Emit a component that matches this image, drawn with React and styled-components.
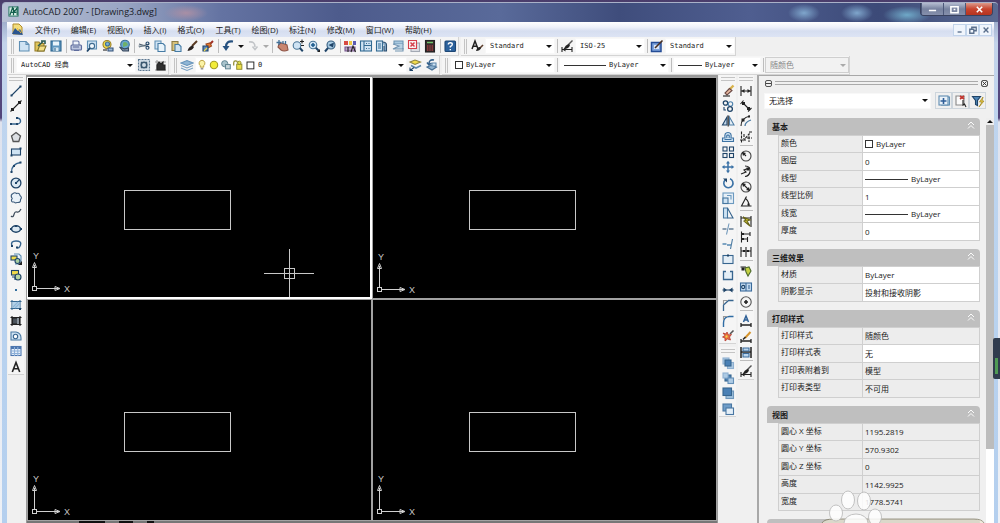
import React from 'react';
import styled, { createGlobalStyle, css } from 'styled-components';

const Global = createGlobalStyle`
  * { box-sizing: border-box; }
  html, body { margin: 0; height: 100%; overflow: hidden; }
  body { font: 8px/12px "Open Sans", "Noto Sans CJK SC", sans-serif; color: #1a1a1a; }
  button, select { font: inherit; color: inherit; margin: 0; padding: 0; border: 0; background: none; }
`;

/* ---------- icons ---------- */

const N = '#1f4468';
const L = '#cfe3f3';
const K = '#222';
const Y = '#f2dc4a';

const IconSvg = styled.svg`
  display: block;
  flex: none;
  width: 14px;
  height: 14px;
  fill: none;
  stroke: ${N};
  stroke-width: 1.1;
`;

const Icon = ({ name }) => (
  <IconSvg viewBox="0 0 14 14" aria-hidden="true">{ICONS[name]}</IconSvg>
);

const dot = (x, y, c = N, s = 2) => (
  <rect key={`${x}-${y}`} x={x - s / 2} y={y - s / 2} width={s} height={s} fill={c} stroke="none" />
);

const ICONS = {
  page: <><path d="M2.500 2.500h6.500l3 3v6.500h-9.500z" fill={L} stroke="#5f8fb4" /><path d="M9 2.500v3h3" stroke="#5f8fb4" /></>,
  open: <><path d="M2 3h4l1 1.500h4v7.500H2z" fill="#e0c55a" stroke="#9a7f2a" /><path d="M4.500 12l2-5h6.500l-2 5z" fill="#f3df86" stroke="#7e7128" /><path d="M5 7l5-4.500M8 2h4v3" stroke="#2d5c55" strokeWidth="1.600" /></>,
  save: <><rect x="2" y="2" width="10" height="10" fill="#5f97bf" stroke="#2c658f" /><rect x="4" y="2.500" width="6" height="4" fill="#eaf5fb" stroke="none" /><rect x="4.500" y="8.500" width="5" height="3.500" fill="#d7e8f2" stroke="none" /><path d="M6 9v3" stroke="#2c658f" /></>,
  print: <><path d="M4 6V2h5l1 1v3" fill="#eef3fa" stroke="#6c79a8" /><rect x="2" y="6" width="10.500" height="5" rx="1" fill="#bcc6df" stroke="#5d6b9c" /><path d="M4 8h6M5 11.500h5" stroke="#5d6b9c" /></>,
  preview: <><path d="M2.500 2h9v8h-9z" fill={L} stroke="#5f8fb4" /><circle cx="7" cy="7" r="2.600" fill="#f3f9fd" stroke="#3f6c90" /><path d="M5 9l-3 3.500" strokeWidth="1.800" /></>,
  publish: <><circle cx="6" cy="5.500" r="4" fill={Y} stroke="#9b7f26" /><circle cx="6.500" cy="5" r="2" fill="#7cb1d5" stroke="#3d6f95" /><path d="M7 9h5v3H7z" fill="#9bb7d4" stroke="#33527a" /><path d="M2 11h4" stroke={K} /></>,
  globe: <><circle cx="8" cy="5.500" r="4.300" fill="#67a5cf" stroke="#3a6f94" /><path d="M6 4q2-2 4 0t-1 3-3 1z" fill="#6fb069" stroke="none" /><path d="M2.500 8l5 2 4-1v3H6z" fill="#7e8fa5" stroke="#33455c" /></>,
  cut: <><path d="M2 5l10 3M2 8l10-3" stroke="#4d5d6c" /><circle cx="10.500" cy="4.500" r="1.500" /><circle cx="10.500" cy="8.800" r="1.500" /><path d="M1.500 7h6" stroke="#7b8c9a" /></>,
  copy: <><path d="M2 2h6v8H2z" fill={L} stroke="#5f8fb4" /><path d="M5 4.500h5l2 2v6H5z" fill="#e8f3fa" stroke="#457ba4" /></>,
  paste: <><path d="M3 2.500h6v9H3z" fill="#d7c27b" stroke="#8a7a45" /><path d="M6 5.500h4l2 2v5H6z" fill={L} stroke="#457ba4" /></>,
  brush: <><path d="M12 2L7 7" stroke="#5a3a22" strokeWidth="2" /><path d="M7.500 6.500q-4 1-5 5.500 5-.5 6.500-4z" fill="#2a2320" stroke="none" /></>,
  match: <><path d="M12 2L9 5" stroke="#a02f25" strokeWidth="2" /><path d="M5 5l4-1 1.500 3L7 9z" fill="#e77b2d" stroke="#a04a20" /><path d="M2 7h5v5H2z" fill="#5d86ba" stroke={N} /><path d="M3 12l3-3" stroke={Y} /></>,
  undo: <><path d="M12 2.500Q5 1.500 5 8" strokeWidth="2.200" stroke="#26517f" /><path d="M1.500 7h7L5 12z" fill="#26517f" stroke="none" /></>,
  redo: <path d="M3 3q6-1 6 5M6.500 7.500l2.500 3 2.500-3" strokeWidth="1.600" stroke="#c2c5c8" />,
  pan: <><path d="M4 5l3-1 5 2 1 5q-4 2-7 0L3 8z" fill="#c98670" stroke="#8e5446" /><path d="M4 1v5M1.500 3.500h5M8 2v3M10.500 2v3" stroke="#3f6f97" strokeWidth="1.300" /></>,
  zoomrt: <><circle cx="6" cy="6.500" r="3.800" fill={L} stroke="#4a7596" /><path d="M8.800 9l3 3.200" strokeWidth="2" /><path d="M9 2.500h4M11 .500v4M10 6.500h3" stroke={K} /></>,
  zoomwin: <><circle cx="6" cy="6" r="3.800" fill={L} stroke="#4a7596" /><path d="M8.800 8.800l3 3" strokeWidth="2" /><path d="M4 6h4M6 4v4" stroke="#1c5a8c" strokeWidth="1.500" /><path d="M10 13h3v-3z" fill={K} stroke="none" /></>,
  zoomprev: <><circle cx="8" cy="6" r="4" fill="#a9cbe2" stroke="#365e80" /><path d="M5 9l-3 3.500" strokeWidth="2" /><path d="M11 3.500L5.500 6 10 8.500z" fill={N} stroke="none" /></>,
  props: <><rect x="1" y="2" width="4" height="4" fill="#d84b42" stroke="none" /><rect x="6" y="2" width="3" height="4" fill="#edc945" stroke="none" /><rect x="10" y="2" width="3" height="4" fill="#5b5ab2" stroke="none" /><path d="M2 8h10v4H2z" fill="#bca1c8" stroke="#74558b" /><path d="M8 13l2-6 2.500 6M5 8v5" stroke={K} /></>,
  center: <><rect x="1.500" y="2" width="11" height="10" fill={L} stroke="#336b93" /><path d="M5 2v10M5 6.500h7M7 4.500h1M9.500 4.500h1M7 9.500h1M9.500 9.500h1" stroke="#336b93" /></>,
  palettes: <><rect x="1.500" y="2" width="6" height="10" fill={L} stroke="#336b93" /><path d="M3 5h3M3 7h3M3 9h3" stroke="#336b93" /><path d="M7.500 3q4 0 4 3v6h-2.500V7" fill="#86a9c7" stroke="#2c4f70" /></>,
  sheet: <><path d="M3 2h9v3H3z" fill="#a9c9e0" stroke="#6d94b2" /><path d="M2 5l6 2-6 3h10V5" fill="#b9d2e4" stroke="#7295b2" /><path d="M4 12h8V9" stroke="#7295b2" /></>,
  markup: <><rect x="4" y="4" width="8.500" height="8.500" fill="#dddfe4" stroke="#a3a9b3" /><path d="M1.500 1.500h8v8h-8z" fill="#fbeff0" stroke="#d43f4b" /><path d="M3.500 3.500l4 4M7.500 3.500l-4 4" stroke="#d43f4b" strokeWidth="1.500" /></>,
  calc: <><rect x="2.500" y="1.500" width="9" height="11.500" fill="#3a2a2c" stroke={K} /><path d="M4 3.500h6" stroke="#6fc26b" strokeWidth="1.500" /><path d="M4 7h6M4 9h6M4 11h6" stroke="#cf4a4a" strokeDasharray="1.400 .9" /></>,
  help: <><rect x="2" y="2" width="10.500" height="10.500" rx="1" fill="#2c629d" stroke="#1d4674" /><path d="M5.300 5.500q0-1.800 2-1.800t2 1.600-2 2.200v1M7.300 10v1.300" stroke="#fff" strokeWidth="1.400" /></>,
  textstyle: <><path d="M2 10L5 2l3 8M3.200 7.200h3.600" stroke={K} strokeWidth="1.500" /><path d="M13 6l-4 4" stroke="#5c3d2b" strokeWidth="1.600" /><path d="M10 8q-3 0-4 4 4 0 5-3z" fill={K} stroke="none" /></>,
  dimstyle: <><path d="M2 8v5M12 8v5M2 10.500h10" stroke={K} /><path d="M2.500 10.500l3-2v4z" fill={K} stroke="none" /><path d="M12.500 1.500L8 6" stroke="#555" strokeWidth="1.500" /><path d="M9 5q-4 1-5 5 5 0 6-4z" fill={K} stroke="none" /></>,
  tablestyle: <><rect x="1.500" y="3.500" width="9.500" height="9" fill="#7fa4dc" stroke="#244c96" strokeWidth="1.500" /><path d="M4 6h5v4H4z" fill="#dbe6f8" stroke="none" /><path d="M12.500 1.500L7 7l-2 2" stroke="#4a3020" strokeWidth="1.600" /></>,
  gear: <><rect x="1.500" y="1.500" width="11" height="11" fill="#d0dbe5" stroke="#5c7790" strokeDasharray="2 1" /><circle cx="7" cy="7" r="2.800" stroke="#3c5870" strokeWidth="1.600" /><path d="M4 4l1 1M10 4L9 5M4 10l1-1M10 10L9 9" stroke="#3c5870" /></>,
  home: <><path d="M2 4h11M4 2v10M2 12h11" stroke="#999" /><path d="M4 7l2-3 2 2 2-2v3h2v5H4z" fill="#2e2e2e" stroke={K} /></>,
  layers: <><path d="M1 5l6-2.500L13 5 7 7.500z" fill="#8fb6d6" stroke="#6794ba" /><path d="M1 7.500L7 10l6-2.500M1 10l6 2.500L13 10" stroke="#7ba2c4" /></>,
  bulb: <><path d="M7 1.500a3.500 3.500 0 0 1 2 6.300V9.500H5V7.800a3.500 3.500 0 0 1 2-6.300z" fill="#fbf3a5" stroke="#b89c3e" /><path d="M5.500 11.500h3" stroke="#555" /></>,
  sun: <circle cx="7" cy="7" r="4.300" fill="#f2ec3a" stroke="#a59d28" strokeWidth="1.300" />,
  vpfreeze: <><circle cx="5.500" cy="5.500" r="3.600" fill="#a9c3cc" stroke="#5b7f8d" /><rect x="6.500" y="6.500" width="5.500" height="5" fill="#c7d5da" stroke="#5b7f8d" /></>,
  lock: <><path d="M2 7.500V4.500a2.200 2.200 0 0 1 4.400 0" stroke="#8f8a2b" strokeWidth="1.400" /><rect x="5.500" y="6" width="6" height="6" fill="#ede04a" stroke="#8f8a2b" /><circle cx="8.500" cy="4.500" r="2" fill="#dfe04f" stroke="#8f8a2b" /></>,
  swatch: <rect x="3.500" y="3.500" width="8" height="8" fill="#fff" stroke={K} />,
  laycur: <><path d="M2 4l5-2 5.500 2L7 6.500z" fill={Y} stroke="#8d8440" /><path d="M3 7.500L8 10l5-2.500" stroke="#5f88ab" strokeWidth="1.600" /><path d="M2 12.500l4-3M2 9.500v3h3" stroke={N} /></>,
  layprev: <><path d="M3 9l5-2 4.500 2L8 12z" fill="#8fb2d0" stroke="#456e93" /><path d="M10 2Q5 1 5 6M3 4.500l2 2.500 2.500-2" strokeWidth="1.600" stroke="#35628c" /><path d="M8 5h4v3H8z" fill={L} stroke="#5f88ab" /></>,

  line: <><path d="M2.500 11.500l9-9" />{dot(2.5, 11.5)}{dot(11.5, 2.5)}</>,
  xline: <><path d="M1.500 12.500l11-11" stroke={K} />{dot(3.5, 10.5, K, 3)}{dot(10.5, 3.5, K, 3)}</>,
  pline: <><path d="M2 10h7q3-1 2.500-3.500T8 4" stroke="#37658f" strokeWidth="1.300" />{dot(2, 10)}{dot(8, 10)}{dot(8, 4)}</>,
  polygon: <path d="M7 2.500l4.500 3.500-1.700 5.500H4.200L2.500 6z" fill="#dcdfe3" stroke="#555" strokeWidth="1.300" />,
  rect: <><rect x="2.500" y="4" width="9" height="6" fill={L} />{dot(2.5, 10.5)}{dot(11.5, 3.5)}</>,
  arc: <><path d="M2.500 12q0-8 9-9.500" stroke="#37658f" strokeWidth="1.300" />{dot(2.5, 12)}{dot(5, 6)}{dot(11.5, 2.5)}</>,
  circle: <><circle cx="7" cy="7" r="4.900" fill="#dbe8f2" strokeWidth="1.300" /><path d="M7 7l3-3" />{dot(7, 7)}</>,
  cloud: <path d="M4 2.500q2-1.500 3.500 0 3-1 3.500 2 2.500 2 .5 4 .5 3.500-3.500 3-2 1-3-.5-3 .5-2.500-2.500Q4 7.500 2.500 6.500 1.500 3.500 4 2.500z" fill="#e9f1f8" stroke="#3f5d7d" />,
  spline: <path d="M2 10q2 2 3-1.500T8 6t4-3" stroke="#3b4a5a" strokeWidth="1.200" />,
  ellipse: <><ellipse cx="7" cy="7" rx="4.500" ry="3.200" fill="#dbe8f2" strokeWidth="1.500" />{dot(7, 4)}{dot(2, 7)}{dot(12, 7)}</>,
  earc: <><path d="M3 9Q1 4 7 4t4.500 4-3.500 2.500" stroke="#37658f" strokeWidth="1.400" />{dot(3, 9)}{dot(8, 10.5)}</>,
  insblock: <><path d="M5 2h5l2 2v8H6" fill="#e7f1f8" stroke="#5f8fb4" /><rect x="2" y="4" width="6" height="4" fill={Y} /><circle cx="8.500" cy="9" r="2.500" fill="#a9cfa0" /><path d="M9 13h4v-4z" fill={K} stroke="none" /></>,
  mkblock: <><rect x="2.500" y="2.500" width="7" height="4.500" fill={Y} /><circle cx="9" cy="9" r="3" fill="#b9d6a2" /><path d="M3 9h3v3" /></>,
  point: dot(7, 7, '#336f9f', 2),
  hatch: <><path d="M3 2v10M11 2v10M1.500 3.500h11M1.500 10.500h11" stroke="#356892" /><rect x="3.500" y="4" width="7" height="6" fill="#b3d2e9" stroke="none" /><path d="M4 9l5-5M6 10l5-5" stroke="#8db5d6" />{dot(11, 11)}</>,
  gradient: <><path d="M3 2v10M11 2v10M1.500 3.500h11M1.500 10.500h11" stroke={K} /><rect x="3.500" y="4" width="7" height="6" fill="#4c545c" stroke={K} /><path d="M8 4h2v6H8z" fill="#8a949d" stroke="none" /></>,
  region: <><path d="M2 3h5q5 1 5 6v2H2z" fill={L} stroke="#4b7ba4" /><circle cx="6.500" cy="7.500" r="2.200" fill="#fff" stroke="#37658f" /></>,
  table: <><rect x="2" y="2.500" width="10" height="9" fill="#e7f0fa" stroke="#4c76ae" /><path d="M2 4h10" stroke="#4c76ae" strokeWidth="2" /><path d="M2 7h10M2 9.500h10M5.500 3v9M8.800 3v9" stroke="#8db0d8" /></>,
  mtext: <path d="M3.300 12L7 2.500 10.700 12M4.500 8.800h5" stroke={K} strokeWidth="1.600" />,

  erase: <><path d="M12.500 1.500L8 6" stroke="#d8b24c" strokeWidth="2.400" /><path d="M8.500 4.500L4 9l2 2 5-4.500z" fill="#e9b9a0" stroke="#6b4a45" /><path d="M2 12h7" stroke={K} /></>,
  copyobj: <><circle cx="4.500" cy="4" r="2.200" strokeWidth="1.300" /><circle cx="9.500" cy="5" r="2.200" stroke="#4f83ae" /><circle cx="9" cy="10" r="2.400" strokeWidth="1.300" /><path d="M3 8v3h2" /></>,
  mirror: <><path d="M6 3v8H1.500z" fill="#bfd5e8" /><path d="M8.500 3v8H13z" fill="#e7f0f7" stroke="#4f7ea6" /><path d="M7.200 1.500v11" stroke={K} /></>,
  offset: <><path d="M1.500 11.500V8h2.500q-1-5.500 3-5.500T10 8h2.500v3.500z" fill={L} stroke="#3e73a3" /><path d="M3.500 9.500h7M6 8q-1-3 1-3t1 3" stroke="#3e73a3" /></>,
  array: <><rect x="2" y="2" width="4" height="4" /><rect x="8.500" y="2" width="4" height="4" /><rect x="2" y="8.500" width="4" height="4" /><rect x="8.500" y="8.500" width="4" height="4" /></>,
  move: <><path d="M7 2v10M2 7h10" stroke="#3b72a6" strokeWidth="1.500" /><path d="M7 .8L9 3.500H5zM7 13.200L9 10.500H5zM.8 7L3.500 5v4zM13.200 7L10.500 5v4z" fill="#3b72a6" stroke="none" /></>,
  rotate: <><path d="M4 4a4.600 4.600 0 1 0 5-1.200" stroke="#3b72a6" strokeWidth="1.600" /><path d="M2 2.500h4v4z" fill={N} stroke="none" /></>,
  scale: <><rect x="2" y="2" width="10.500" height="10.500" fill="#e7f0f7" stroke="#6c9ac0" /><rect x="2" y="7" width="5" height="5.500" fill={L} stroke="#47779f" /><path d="M6 4.500h4v4" stroke="#6c9ac0" /></>,
  stretch: <><path d="M2.500 2h4v10h-4z" fill={L} stroke="#47779f" /><path d="M6.500 2l5.500 10H6.500" stroke="#37658f" /></>,
  trim: <><path d="M8 1.500l-2.500 11" stroke="#6f97ba" /><path d="M1.500 7h4M8 7h4.500" /></>,
  extend: <><path d="M11.500 2L9.500 12" stroke="#47779f" /><path d="M1.500 7h4M6 8h4" stroke="#5789b2" strokeWidth="1.300" /></>,
  breakpt: <><rect x="2" y="3.500" width="10" height="8" fill="#e4eef6" stroke="#37658f" />{dot(7, 3.5)}</>,
  brk: <path d="M5 3.500H2.500v8h9v-8H9" fill="#e4eef6" stroke="#37658f" strokeWidth="1.300" />,
  join: <><path d="M1.500 7h11" /><path d="M2.500 4.500L6 7 2.500 9.500zM11.500 4.500L8 7l3.500 2.500z" fill={N} stroke="none" /></>,
  chamfer: <><path d="M2.500 13V7l5-4.500h5" stroke="#37658f" strokeWidth="1.300" /><path d="M2.500 6V2.500h4" stroke="#999" /></>,
  fillet: <><path d="M2.500 13V9q0-6.500 6-6.500h4" stroke="#2f6ca4" strokeWidth="1.400" /><path d="M2.500 6V2.500h4" stroke="#999" /></>,
  explode: <><path d="M12.500 1.500L9 5" stroke="#555" strokeWidth="1.600" /><path d="M2 4l3 1 1-2 1.500 3 3-.5-2 2.500 1 3-3-1-2.500 2V9L1.500 8 4 6.500z" fill="#e8703f" stroke="#b53a30" strokeWidth=".8" />{dot(5.5, 7.5, Y, 2)}</>,

  front: <><rect x="2" y="2" width="6" height="6" fill="#aecbe4" stroke="#8fb0d0" /><rect x="6.500" y="6.500" width="6" height="6" fill="#aecbe4" stroke="#8fb0d0" /><rect x="4" y="4" width="6" height="6" fill="#4a80b5" stroke="#37658f" /></>,
  back: <><rect x="4" y="4" width="6" height="6" fill="#4a80b5" stroke="#37658f" /><rect x="2" y="2" width="5" height="5" fill="#aecbe4" stroke="#8fb0d0" /><rect x="7" y="7" width="5.500" height="5.500" fill="#aecbe4" stroke="#648fb7" /></>,
  above: <><rect x="5" y="5" width="7.500" height="7.500" fill="#9fc0dd" stroke="#6f97bb" /><rect x="2" y="2" width="8.500" height="7.500" fill="#4a80b5" stroke="#37658f" /></>,
  under: <><rect x="2" y="2" width="8.500" height="7" fill="#6f9dc8" stroke="#4a77a3" /><rect x="5" y="6" width="7.500" height="6.500" fill="#e3eef7" stroke="#4a77a3" /></>,

  dlinear: <><path d="M2 2v10M12 2v10M2 7h10" stroke={K} /><path d="M2.500 7l3-2v4zM11.500 7l-3-2v4z" fill={K} stroke="none" /></>,
  daligned: <><path d="M3.500 3.500l7 7M1.500 5l3-3.500M9 12.500l3.500-3.500" stroke={K} />{dot(4.5, 4.5, K, 3)}{dot(9.5, 9.5, K, 3)}</>,
  darc: <><path d="M2 12q0-8 9-10" stroke={K} /><path d="M6 12q0-4 6-6" stroke="#47779f" strokeWidth="1.300" />{dot(4, 6, K, 3)}{dot(10, 2.5, K)}</>,
  dord: <path d="M2.500 1.500v11M1 10h6M5 4v6l5-6v8M8 8h5M10 2h3" stroke={K} strokeDasharray="3 1" />,
  dradius: <><circle cx="7" cy="7" r="5" stroke="#444" /><path d="M7 7L3.500 3.500" stroke={K} /><path d="M3 3l4 1-3 3z" fill={K} stroke="none" /></>,
  djog: <><path d="M6 2q6 0 5 6-1 4-5 4.500M2 10l5-2-2-2 5-2" stroke={K} />{dot(9, 5, K, 3)}</>,
  ddiam: <><circle cx="7" cy="7" r="5" stroke="#444" /><path d="M3.500 3.500l7 7" stroke={K} /><path d="M3 3l4 1-3 3zM11 11l-4-1 3-3z" fill={K} stroke="none" /></>,
  dangular: <><path d="M7.500 1.500L2.500 11H12.500M6 3q4 3 4 8" stroke={K} />{dot(9.5, 9.5, K)}</>,
  dquick: <><path d="M2 2v11M12 2v11M2 4h10" stroke={K} /><path d="M4 3l7 3-3 1 3 5-6-5 2-1z" fill="#e8de32" stroke="#68641b" /></>,
  dbase: <><path d="M2.500 1.500v11M2.500 4h8.500M11 2v4M2.500 9h6M8.500 7v5" stroke={K} />{dot(4, 4, K)}{dot(4, 9, K)}</>,
  dcont: <><path d="M2 2v10M7 2v10M12 2v10M2 6h10" stroke={K} />{dot(5, 6, K)}{dot(9, 6, K)}</>,
  leader: <><path d="M1.500 3h5l3 4" stroke={K} /><path d="M6 4l4-1 2 4-3 5-2-4z" fill="#c4d043" stroke="#4d6a2b" />{dot(4, 5, K, 3)}</>,
  tol: <><rect x="1.500" y="3" width="11" height="8" fill="#c3daf0" stroke="#3b6b9b" /><path d="M7 3v8M10 5v4" stroke="#3b6b9b" /><circle cx="4.200" cy="7" r="1.600" /></>,
  cmark: <><circle cx="7" cy="7" r="5.200" stroke="#555" /><path d="M7 5v4M5 7h4" stroke={K} strokeWidth="1.600" /></>,
  dedit: <><path d="M2 9v4M12 9v4M2 11h10" stroke={K} strokeWidth="1.300" /><path d="M4.500 8L7 2l2.500 6M5.500 6h3" stroke="#2f6096" strokeWidth="1.500" /></>,
  dtedit: <><path d="M2 9v4M12 9v4M2 11h10" stroke={K} strokeWidth="1.300" /><path d="M11.500 2L6 8" stroke="#d5942d" strokeWidth="2" /><path d="M6.500 7L4 9.500" stroke={K} strokeWidth="1.500" /></>,
  dupdate: <><path d="M2 2v11M12 2v11M2 7h10" stroke={K} strokeWidth="1.500" /><path d="M4 3h6v3H4zM4 8.500h6V12H4z" fill="#b9d4ec" stroke="#3b6b9b" /></>,

  pickadd: <><rect x="4.500" y="3" width="8" height="8" fill={L} stroke="#5f8cb1" /><rect x="2" y="2" width="9" height="9" fill="#eaf2f9" stroke="#5f8cb1" /><path d="M6.500 4v6M3.500 7h6" stroke="#2f5e97" strokeWidth="1.600" /></>,
  selobj: <><path d="M2 2h8v9H2z" fill="#fbfbfb" stroke="#888" /><path d="M6 5l4-3M6 2l4 3" stroke="#c2352e" strokeWidth="1.600" /><path d="M9 6v5l1.500-1 1.500 3" stroke={K} /></>,
  qselect: <><path d="M1.500 2.500h8l-3 4v5l-2-1v-4z" fill="#4d83b4" stroke={N} /><path d="M12 3L8.500 8h2.500L8 13l5-6h-2z" fill="#ead044" stroke="#a08421" strokeWidth=".7" /></>,
};

/* ---------- window frame ---------- */

const Desktop = styled.div`
  position: relative;
  display: flex;
  height: 100vh;
  padding: 2px 2px 0 2px;
  overflow: hidden;
  background: linear-gradient(#4a3d6b, #5b4f85 30px, #51447a 118px, #dfe3ee 122px, #eef1f6 100%);
`;

const Window = styled.div`
  flex: 1;
  min-width: 0;
  display: flex;
  flex-direction: column;
  padding: 0 4px 0 5px;
  border-top: 1px solid #a9b1c8;
  border-radius: 4px 4px 0 0;
  background: linear-gradient(#8290b4, #c3d3ea 40px, #bdd5f0 160px, #b4cfee 100%);
`;

const TitleBar = styled.header`
  display: flex;
  flex: none;
  align-items: flex-start;
  height: 19px;
  margin: 0 -4px 0 -5px;
  padding: 0 5px 0 6px;
  border-radius: 4px 4px 0 0;
  background:
    radial-gradient(ellipse 22px 8px at 184px 10px, #a98fa5, transparent),
    radial-gradient(ellipse 16px 9px at 802px 10px, #7fa6cc, transparent),
    radial-gradient(ellipse 16px 9px at 855px 10px, #7fa6cc, transparent),
    radial-gradient(ellipse 24px 9px at 905px 12px, #6fa9c8, transparent),
    linear-gradient(90deg, #b7c0d4, #9aa6c4 12%, #6473a2 22%, #4d5b8c 34%, #596a9a 50%, #3f4d7c 62%, #4f5e90 75%, #3c4a78 88%, #5a6a92);
`;

const TitleLogo = styled.svg`
  width: 11px;
  height: 11px;
  margin-top: 3px;
`;

const TitleText = styled.h1`
  flex: 1;
  margin: 0 0 0 4px;
  font-size: 9px;
  line-height: 18px;
  font-weight: 400;
  color: #1a1d28;
`;

const Caption = styled.div`
  display: flex;
  border: 1px solid #39425f;
  border-top: 0;
  border-radius: 0 0 4px 4px;
  overflow: hidden;
`;

const CaptionButton = styled.button`
  display: flex;
  align-items: center;
  justify-content: center;
  width: ${(p) => (p.$close ? 27 : 22)}px;
  height: 12px;
  border-left: 1px solid #4d587a;
  background: ${(p) => (p.$close
    ? 'linear-gradient(#dd9a8b, #c8442f 50%, #b53420)'
    : 'linear-gradient(#b4bcd0, #77829f 50%, #8690ac)')};
`;

const Client = styled.div`
  flex: 1;
  min-height: 0;
  display: flex;
  flex-direction: column;
  background: #f0f0f0;
`;

const MenuBar = styled.nav`
  display: flex;
  flex: none;
  align-items: center;
  gap: 11px;
  height: 15px;
  padding: 0 2px 0 4px;
  background: linear-gradient(#fff, #eef1fa 35%, #d6def0 60%, #dde4f4);
`;

const MenuItem = styled.button`
  line-height: 14px;
  white-space: nowrap;
`;

const MdiControls = styled.div`
  display: flex;
  margin-left: auto;
`;

const MdiButton = styled.button`
  display: flex;
  align-items: center;
  justify-content: center;
  width: 13px;
  height: 12px;
  border: 1px solid #c2d4ea;
  background: #f0f5fc;
`;

/* ---------- toolbars ---------- */

const ToolRow = styled.div`
  display: flex;
  flex: none;
  align-items: stretch;
  gap: 2px;
  height: 19px;
  padding-left: 1px;
`;

const Bar = styled.div`
  display: flex;
  flex-direction: ${(p) => (p.$vertical ? 'column' : 'row')};
  align-items: center;
  border: 1px solid #d4d4d4;
  border-width: ${(p) => (p.$vertical ? '0 0 1px' : '0 1px 1px 0')};
  background: #f5f5f5;
`;

const Grip = styled.span`
  flex: none;
  border: 1px solid #c4c4c4;
  ${(p) => (p.$vertical
    ? css`width: 14px; height: 4px; margin: 2px 0; border-width: 1px 0;`
    : css`width: 3px; height: 15px; margin: 0 2px 0 3px; border-width: 0 1px;`)}
`;

const Divider = styled.span`
  flex: none;
  background: #bdbdbd;
  ${(p) => (p.$vertical
    ? css`width: 13px; height: 1px; margin: 1px 0 2px;`
    : css`width: 1px; height: 14px; margin: 0 1px 0 2px;`)}
`;

const ToolButton = styled.button`
  display: flex;
  flex: none;
  align-items: center;
  justify-content: center;
  width: 16px;
  height: 16px;
`;

const VToolButton = styled(ToolButton)`
  height: 15px;
  &:nth-of-type(3n) { height: 16px; }
`;

const DropButton = styled.button`
  display: flex;
  flex: none;
  align-items: center;
  justify-content: center;
  width: 9px;
  height: 16px;
`;

const Caret = styled.span`
  flex: none;
  border: solid transparent;
  border-width: 3px 3px 0;
  border-top-color: ${(p) => (p.$pale ? '#aaa' : '#111')};
`;

const ComboBox = styled.div`
  display: flex;
  align-items: center;
  flex: ${(p) => (p.$width ? 'none' : '1')};
  width: ${(p) => (p.$width ? `${p.$width}px` : 'auto')};
  min-width: 0;
  height: 16px;
  padding: 0 2px 0 4px;
  border: 1px solid ${(p) => (p.$disabled ? '#cfcfcf' : '#f8f8f8')};
  background: ${(p) => (p.$disabled ? '#f2f2f2' : '#fff')};
  color: ${(p) => (p.$disabled ? '#888' : '#1a1a1a')};
  font-family: ${(p) => (p.$ui ? 'inherit' : '"DejaVu Sans Mono", "Noto Sans CJK SC", monospace')};
  font-size: ${(p) => (p.$ui ? 8 : 7)}px;
`;

const Select = styled.select`
  flex: 1;
  min-width: 0;
  height: 14px;
  appearance: none;
  outline: 0;
  opacity: 1;
`;

const SmallIcons = styled.span`
  display: flex;
  margin: 0 2px 0 -4px;
  & > svg { width: 12px; height: 12px; }
`;

const LineSample = styled.span`
  flex: none;
  width: ${(p) => p.$length}px;
  height: 1px;
  margin-right: 3px;
  background: #333;
`;

const Swatch = styled.span`
  flex: none;
  width: 8px;
  height: 8px;
  margin-right: 3px;
  border: 1px solid #333;
  background: #fff;
`;

const Combo = ({ label, value, width, prefix, disabled, ui }) => (
  <ComboBox $width={width} $disabled={disabled} $ui={ui}>
    {prefix}
    <Select aria-label={label} defaultValue={value} disabled={disabled}>
      <option>{value}</option>
    </Select>
    <Caret $pale={disabled} />
  </ComboBox>
);

const Tools = ({ items, vertical }) => items.map((n, i) => {
  const Btn = vertical ? VToolButton : ToolButton;
  if (n === '|') return <Divider key={i} $vertical={vertical} />;
  if (n === 'v') return <DropButton key={i} aria-label="drop"><Caret $pale={items[i - 1] === 'redo'} /></DropButton>;
  return <Btn key={i} aria-label={n}><Icon name={n} /></Btn>;
});

/* ---------- workspace ---------- */

const Workspace = styled.div`
  flex: 1;
  min-height: 0;
  display: flex;
`;

const SideColumn = styled.div`
  flex: none;
  display: flex;
  flex-direction: column;
  gap: 3px;
  width: ${(p) => p.$width}px;
  padding: 0 ${(p) => p.$end || 1}px 0 1px;
`;

const Drawing = styled.main`
  flex: 1;
  min-width: 0;
  display: flex;
  flex-direction: column;
  border: 2px solid #999;
  border-width: 2px 1px 0 1px;
  background: #999;
`;

const Viewports = styled.div`
  flex: 1;
  min-height: 0;
  display: grid;
  grid-template: 1fr 1fr / 1fr 1fr;
`;

const Viewport = styled.section`
  min-width: 0;
  min-height: 0;
  border: 1px solid ${(p) => (p.$active ? '#fff' : '#a2a2a2')};
  border-width: ${(p) => (p.$active ? '1px 2px 2px 1px' : '1px')};
  display: grid;
  background: #000;
  & > * { grid-area: 1 / 1; }
`;

const Scene = styled.svg`
  display: block;
  width: 100%;
  height: 100%;
  fill: none;
  stroke: #c8c8c8;
`;

const Ucs = styled.svg`
  display: block;
  align-self: end;
  width: 46px;
  height: 48px;
  fill: none;
  stroke: #d0d0d0;
  text { fill: #c8c8c8; stroke: none; font: 9px "Liberation Sans", sans-serif; }
`;

const CommandStrip = styled.div`
  flex: none;
  height: 2px;
  background: linear-gradient(90deg, transparent 52px, #111 52px 78px, #777 78px 92px, #111 92px 106px, #777 106px 120px, #111 120px 127px, transparent 127px), #777;
`;

const View = ({ active }) => (
  <Viewport $active={active}>
    <Scene>
      <rect x="96.500" y="112.500" width="106" height="39" />
      {active && (
        <g>
          <path d="M236 195.500h50M261.500 171v49" />
          <rect x="256.500" y="190.500" width="10" height="10" />
        </g>
      )}
    </Scene>
    <Ucs viewBox="0 0 46 48">
      <rect x="4.500" y="37.500" width="4" height="4" />
      <path d="M6.500 37V16M9 39.500h22" />
      <path d="M4.500 18.500l2-5 2 5zM27 37.500l5 2-5 2z" />
      <text x="5" y="10">Y</text>
      <text x="36" y="43">X</text>
    </Ucs>
  </Viewport>
);

/* ---------- properties palette ---------- */

const Palette = styled.aside`
  flex: none;
  display: flex;
  flex-direction: column;
  width: 237px;
  border: solid #a8a8a8;
  border-width: 1px 0 0 2px;
  background: #f0f0f0;
`;

const PaletteHead = styled.div`
  display: flex;
  flex: none;
  align-items: center;
  gap: 3px;
  height: 14px;
  padding: 0 6px 0 6px;
`;

const HeadButton = styled.button`
  display: flex;
  align-items: center;
  justify-content: center;
  width: 7px;
  height: 7px;
  border: 1px solid #555;
  border-radius: 2px;
`;

const HeadRule = styled.span`
  flex: 1;
  height: 4px;
  border: 1px solid #aaa;
  border-width: 1px 0;
`;

const Chooser = styled.div`
  display: flex;
  flex: none;
  align-items: center;
  padding: 2px 8px 9px 5px;
  gap: 4px;
`;

const ChooserButtons = styled.div`
  display: flex;
`;

const ChooserButton = styled(ToolButton)`
  width: 17px;
  height: 17px;
  border: 1px solid #cdd5dc;
`;

const Scroller = styled.div`
  flex: 1;
  min-height: 0;
  display: flex;
  justify-content: space-between;
`;

const Groups = styled.div`
  flex: 1;
  min-width: 0;
  margin: 0 6px 0 8px;
  overflow: hidden;
`;

const Group = styled.section`
  margin-bottom: 8px;
`;

const GroupHead = styled.h2`
  display: flex;
  align-items: center;
  justify-content: space-between;
  height: 17px;
  margin: 0;
  padding: 0 5px;
  border-radius: 4px 4px 0 0;
  background: #bfbfbf;
  font-size: 8px;
  font-weight: 700;
`;

const Chevron = styled.svg`
  width: 8px;
  height: 8px;
  margin-bottom: 3px;
  fill: none;
  stroke: #fafafa;
`;

const Table = styled.table`
  width: calc(100% - 11px);
  margin-left: 11px;
  border-collapse: collapse;
  table-layout: fixed;
  tr { height: 17px; }
  tr:nth-child(even) { height: 18px; }
  th, td { padding: 0 2px; border: 1px solid #cfcfcf; text-align: left; font-weight: 400; line-height: 12px; overflow: hidden; white-space: nowrap; }
  th { width: 84px; background: #ececec; padding-bottom: 3px; }
`;

const Value = styled.td`
  background: ${(p) => (p.$locked ? '#ededed' : '#fff')};
`;

const ValueLine = styled.span`
  display: flex;
  align-items: center;
`;

const ScrollTrack = styled.div`
  flex: none;
  display: flex;
  flex-direction: column;
  width: 8px;
  background: #fff;
`;

const ScrollArrow = styled.button`
  display: flex;
  align-items: center;
  justify-content: center;
  height: 7px;
  background: #eee;
  & > span { transform: rotate(180deg); }
`;

const ScrollThumb = styled.div`
  flex: 0 0 80%;
  background: #bcbcbc;
`;

const DeskGadget = styled.div`
  position: absolute;
  right: 0;
  top: 338px;
  display: flex;
  align-items: flex-end;
  justify-content: center;
  width: 7px;
  height: 41px;
  padding-bottom: 5px;
  border-radius: 2px 0 0 2px;
  background: #303c4e;
  &::after { content: ''; width: 3px; height: 16px; background: #4f9a55; }
`;

const Paw = styled.svg`
  position: absolute;
  right: 10px;
  bottom: 0;
  width: 220px;
  height: 34px;
`;

const GROUPS = [
  ['基本', [
    ['颜色', 'ByLayer', 'swatch'], ['图层', '0'], ['线型', 'ByLayer', 'line'],
    ['线型比例', '1'], ['线宽', 'ByLayer', 'line'], ['厚度', '0'],
  ]],
  ['三维效果', [['材质', 'ByLayer'], ['阴影显示', '投射和接收阴影']]],
  ['打印样式', [
    ['打印样式', '随颜色', 'locked'], ['打印样式表', '无'],
    ['打印表附着到', '模型', 'locked'], ['打印表类型', '不可用', 'locked'],
  ]],
  ['视图', [
    ['圆心 X 坐标', '1195.2819', 'locked'], ['圆心 Y 坐标', '570.9302', 'locked'],
    ['圆心 Z 坐标', '0', 'locked'], ['高度', '1142.9925', 'locked'], ['宽度', '1778.5741', 'locked'],
  ]],
  ['其他', []],
];

const PropertyGroup = ({ title, rows }) => (
  <Group>
    <GroupHead>
      {title}
      <Chevron viewBox="0 0 8 8"><path d="M1 4l3-3 3 3M1 7.500l3-3 3 3" /></Chevron>
    </GroupHead>
    {rows.length > 0 && (
      <Table>
        <tbody>
          {rows.map(([name, value, kind]) => (
            <tr key={name}>
              <th scope="row">{name}</th>
              <Value $locked={kind === 'locked'}>
                <ValueLine>
                  {kind === 'swatch' && <Swatch />}
                  {kind === 'line' && <LineSample $length={43} />}
                  {value}
                </ValueLine>
              </Value>
            </tr>
          ))}
        </tbody>
      </Table>
    )}
  </Group>
);

/* ---------- data ---------- */

const MENUS = ['文件(F)', '编辑(E)', '视图(V)', '插入(I)', '格式(O)', '工具(T)', '绘图(D)', '标注(N)', '修改(M)', '窗口(W)', '帮助(H)'];

const STANDARD = [
  'page', 'open', 'save', '|', 'print', 'preview', 'publish', 'globe', '|',
  'cut', 'copy', 'paste', 'brush', 'match', '|', 'undo', 'v', 'redo', 'v', '|',
  'pan', 'zoomrt', 'zoomwin', 'zoomprev', '|',
  'props', 'center', 'palettes', 'sheet', 'markup', 'calc', '|', 'help',
];
const DRAW = ['line', 'xline', 'pline', 'polygon', 'rect', 'arc', 'circle', 'cloud', 'spline', 'ellipse', 'earc', 'insblock', 'mkblock', 'point', 'hatch', 'gradient', 'region', 'table', 'mtext'];
const MODIFY = ['erase', 'copyobj', 'mirror', 'offset', 'array', 'move', 'rotate', 'scale', 'stretch', 'trim', 'extend', 'breakpt', 'brk', 'join', 'chamfer', 'fillet', 'explode'];
const ORDER = ['front', 'back', 'above', 'under'];
const DIMENSION = ['dlinear', 'daligned', 'darc', 'dord', '|', 'dradius', 'djog', 'ddiam', 'dangular', '|', 'dquick', 'dbase', 'dcont', '|', 'leader', 'tol', 'cmark', '|', 'dedit', 'dtedit', 'dupdate', '|', 'dimstyle'];

const FileLogo = () => (
  <svg width="13" height="13" viewBox="0 0 13 13" aria-hidden="true">
    <path d="M2 1h6l3 3v7H2z" fill="#f3dd7c" stroke="#b08b2a" />
    <path d="M1 11l3-6 3 3 2-2 3 6z" fill="#2b558f" />
    <path d="M6 5l4 5" stroke="#e8b73c" />
  </svg>
);

const Glyph = ({ d, color = '#fff', size = 9 }) => (
  <svg width={size} height={size} viewBox="0 0 10 10" fill="none" stroke={color} strokeWidth="1.700" aria-hidden="true"><path d={d} /></svg>
);

export default function App() {
  return (
    <Desktop lang="zh-CN">
      <Global />
      <Window>
        <TitleBar>
          <TitleLogo viewBox="0 0 12 12" aria-hidden="true">
            <rect x="1" y="1" width="10" height="10" fill="#d9efe6" stroke="#1c6f5c" />
            <path d="M2 10L5 2l2 4 3-4v8M3 7h6M6 2v8" fill="none" stroke="#14604e" strokeWidth="1.300" />
          </TitleLogo>
          <TitleText>AutoCAD 2007 - [Drawing3.dwg]</TitleText>
          <Caption>
            <CaptionButton aria-label="minimize"><Glyph d="M1 6h8" /></CaptionButton>
            <CaptionButton aria-label="maximize"><Glyph d="M1 2h8v6.500H1zM4 5h2" /></CaptionButton>
            <CaptionButton $close aria-label="close"><Glyph d="M2 2l6 6M8 2l-6 6" /></CaptionButton>
          </Caption>
        </TitleBar>

        <Client>
          <MenuBar>
            <FileLogo />
            {MENUS.map((m) => <MenuItem key={m}>{m}</MenuItem>)}
            <MdiControls>
              <MdiButton aria-label="minimize drawing"><Glyph size={8} color="#5a6f8c" d="M2 7.500h5" /></MdiButton>
              <MdiButton aria-label="restore drawing"><Glyph size={8} color="#5a6f8c" d="M1 4h5v5H1zM3.500 4V1.500H9V6H6" /></MdiButton>
              <MdiButton aria-label="close drawing"><Glyph size={8} color="#5a6f8c" d="M2 2l6 6M8 2l-6 6" /></MdiButton>
            </MdiControls>
          </MenuBar>

          <ToolRow>
            <Bar><Grip /><Tools items={STANDARD} /></Bar>
            <Bar>
              <Grip />
              <Tools items={['textstyle']} />
              <Combo label="文字样式" value="Standard" width={70} />
              <Tools items={['|', 'dimstyle']} />
              <Combo label="标注样式" value="ISO-25" width={70} />
              <Tools items={['|', 'tablestyle']} />
              <Combo label="表格样式" value="Standard" width={70} />
            </Bar>
          </ToolRow>

          <ToolRow>
            <Bar>
              <Grip />
              <Combo label="工作空间" value="AutoCAD 经典" width={120} />
              <Tools items={['gear', 'home']} />
            </Bar>
            <Bar>
              <Grip />
              <Tools items={['layers']} />
              <Combo
                label="图层"
                value="0"
                width={212}
                prefix={<SmallIcons>{['bulb', 'sun', 'vpfreeze', 'lock', 'swatch'].map((n) => <Icon key={n} name={n} />)}</SmallIcons>}
              />
              <Tools items={['laycur', 'layprev']} />
            </Bar>
            <Bar>
              <Grip />
              <Combo label="颜色" value="ByLayer" width={105} prefix={<Swatch />} />
              <Tools items={['|']} />
              <Combo label="线型" value="ByLayer" width={110} prefix={<LineSample $length={42} />} />
              <Tools items={['|']} />
              <Combo label="线宽" value="ByLayer" width={88} prefix={<LineSample $length={24} />} />
              <Tools items={['|']} />
              <Combo label="打印样式" value="随颜色" width={84} disabled ui />
            </Bar>
          </ToolRow>

          <Workspace>
            <SideColumn $width={19} $end={2}>
              <Bar $vertical><Grip $vertical /><Tools vertical items={DRAW} /></Bar>
            </SideColumn>

            <Drawing>
              <Viewports>
                <View active />
                <View />
                <View />
                <View />
              </Viewports>
              <CommandStrip />
            </Drawing>

            <SideColumn $width={19}>
              <Bar $vertical><Grip $vertical /><Tools vertical items={MODIFY} /></Bar>
              <Bar $vertical><Grip $vertical /><Tools vertical items={ORDER} /></Bar>
            </SideColumn>
            <SideColumn $width={20} $end={3}>
              <Bar $vertical><Grip $vertical /><Tools vertical items={DIMENSION} /></Bar>
            </SideColumn>

            <Palette>
              <PaletteHead>
                <HeadButton aria-label="collapse"><Glyph size={5} color="#222" d="M0 5h10" /></HeadButton>
                <HeadRule />
                <HeadButton aria-label="close palette"><Glyph size={5} color="#222" d="M1 1l8 8M9 1l-8 8" /></HeadButton>
              </PaletteHead>
              <Chooser>
                <Combo label="选择" value="无选择" ui />
                <ChooserButtons>
                  {['pickadd', 'selobj', 'qselect'].map((n) => <ChooserButton key={n} aria-label={n}><Icon name={n} /></ChooserButton>)}
                </ChooserButtons>
              </Chooser>
              <Scroller>
                <Groups>
                  {GROUPS.map(([title, rows]) => <PropertyGroup key={title} title={title} rows={rows} />)}
                </Groups>
                <ScrollTrack>
                  <ScrollArrow aria-label="scroll up"><Caret /></ScrollArrow>
                  <ScrollThumb />
                </ScrollTrack>
              </Scroller>
            </Palette>
          </Workspace>
        </Client>
      </Window>

      <DeskGadget />
      <Paw viewBox="0 0 220 34" aria-hidden="true">
        <path d="M52 34q2-4 12-4h140q8 0 10 4" fill="#efe9d2" stroke="#6b6548" opacity=".6" />
        <g fill="#fff" stroke="#bbb" opacity=".85">
          <ellipse cx="78" cy="11" rx="6.500" ry="9" />
          <ellipse cx="94" cy="12" rx="6.500" ry="9" />
          <ellipse cx="66" cy="24" rx="6.500" ry="8" />
          <ellipse cx="105" cy="28" rx="6.500" ry="8" />
          <ellipse cx="86" cy="34" rx="12" ry="9" />
        </g>
      </Paw>
    </Desktop>
  );
}
